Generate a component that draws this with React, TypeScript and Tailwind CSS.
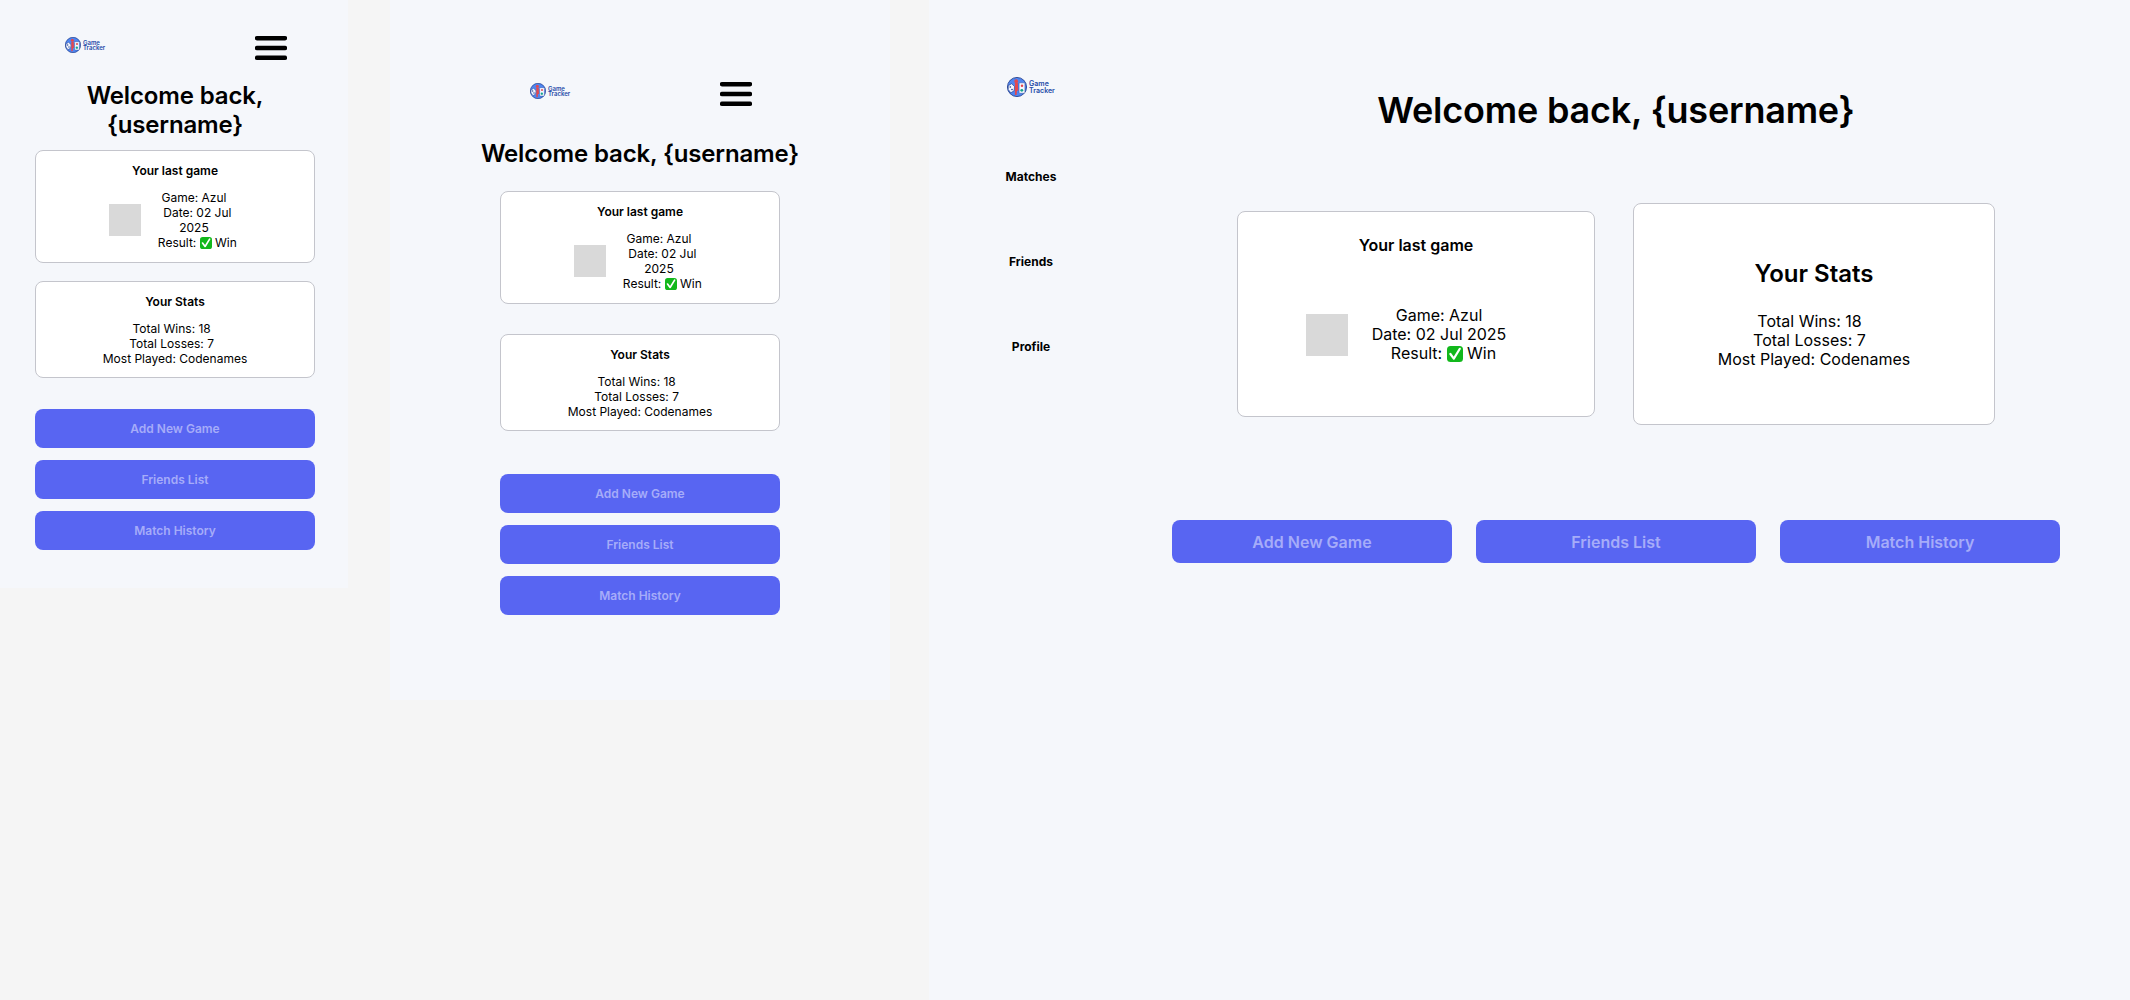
import { Fragment } from "react";

const Logo = ({ large = false }: { large?: boolean }) => (
  <div className="flex items-center gap-[2px]">
    <svg viewBox="0 0 48 48" className={large ? "w-[20px] h-[20px]" : "w-[16px] h-[16px]"}>
      <circle cx="24" cy="24" r="23" fill="#4F86F0" stroke="#1E3A8A" strokeWidth="2" />
      {/* dice */}
      <path d="M3 21 L11 16 L18 23 L17 33 L9 38 L3 30 Z" fill="#F4F7FF" stroke="#1E3A8A" strokeWidth="1.5" />
      <circle cx="8" cy="24" r="2" fill="#1E3A8A" />
      <circle cx="12" cy="30" r="2" fill="#1E3A8A" />
      {/* pawn */}
      <circle cx="22" cy="10" r="4.5" fill="#E5484D" />
      <path d="M19 14 H26 L27 33 H24 L23 43 H19 Z" fill="#E5484D" />
      {/* card */}
      <rect x="29" y="14" width="14" height="25" rx="2" fill="#F4F7FF" stroke="#1E3A8A" strokeWidth="1" />
      <circle cx="36" cy="21" r="3" fill="#E5484D" />
      <circle cx="35.5" cy="32" r="3.5" fill="#14A38B" />
    </svg>
    <div
      className={
        large
          ? "flex flex-col text-[7px] leading-[7px] font-semibold text-[#1E4AA8]"
          : "flex flex-col text-[6px] leading-[5px] font-semibold text-[#1E4AA8]"
      }
    >
      <span>Game</span>
      <span>Tracker</span>
    </div>
  </div>
);

const Hamburger = () => (
  <svg viewBox="0 0 32 24" className="w-[32px] h-[24px]">
    <line x1="2" y1="2.2" x2="30" y2="2.2" stroke="#000" strokeWidth="4.4" strokeLinecap="round" />
    <line x1="2" y1="12" x2="30" y2="12" stroke="#000" strokeWidth="4.4" strokeLinecap="round" />
    <line x1="2" y1="21.8" x2="30" y2="21.8" stroke="#000" strokeWidth="4.4" strokeLinecap="round" />
  </svg>
);

const CheckEmoji = ({ large = false }: { large?: boolean }) => (
  <svg
    viewBox="0 0 16 16"
    className={large ? "inline-block w-[16px] h-[16px] align-[-3px]" : "inline-block w-[12px] h-[12px] align-[-2px]"}
  >
    <rect width="16" height="16" rx="3.5" fill="#12B81C" />
    <path d="M3.4 8 L6.8 12.6 L12.8 2.8" fill="none" stroke="#fff" strokeWidth="2.2" strokeLinecap="round" strokeLinejoin="round" />
  </svg>
);

const buttons = ["Add New Game", "Friends List", "Match History"];

const MobileCards = ({ gap }: { gap: string }) => (
  <div className={`flex flex-col ${gap}`}>
    <div className="w-[280px] h-[113px] bg-white border border-[#C4C5CC] rounded-lg pt-[12px] flex flex-col items-center text-black">
      <h2 className="text-xs leading-[15px] font-semibold">Your last game</h2>
      <div className="self-start ml-[73px] mt-[12px] flex items-center gap-[8px]">
        <div className="w-[32px] h-[32px] bg-[#D9D9D9]" />
        <div className="w-[90px] text-xs leading-[15px] text-center whitespace-pre-wrap">
          <p>Game: Azul</p>
          <p>{"  Date: 02 Jul 2025"}</p>
          <p>
            {"  Result: "}
            <CheckEmoji /> Win
          </p>
        </div>
      </div>
    </div>
    <div className="w-[280px] h-[97px] bg-white border border-[#C4C5CC] rounded-lg pt-[12px] flex flex-col items-center text-black">
      <h2 className="text-xs leading-[15px] font-semibold">Your Stats</h2>
      <div className="mt-[12px] text-xs leading-[15px] text-center whitespace-pre">
        <p>{"Total Wins: 18  "}</p>
        <p>{"Total Losses: 7  "}</p>
        <p>Most Played: Codenames</p>
      </div>
    </div>
  </div>
);

const MobileButtons = () => (
  <div className="flex flex-col gap-[12px]">
    {buttons.map((label) => (
      <button
        key={label}
        className="w-[280px] h-[39px] bg-[#5865F2] rounded-lg text-xs font-semibold text-[#A6ACF9]"
      >
        {label}
      </button>
    ))}
  </div>
);

export default function App() {
  return (
    <div className="flex items-start w-full h-[1000px] bg-[#F5F5F5] font-[Inter,sans-serif]">
      {/* phone */}
      <section className="w-[348px] h-[588px] shrink-0 bg-[#F5F7FB] pl-[35px] flex flex-col">
        <div className="w-[252px] pt-[36px] pl-[30px] flex items-start justify-between">
          <div className="mt-[1px]">
            <Logo />
          </div>
          <Hamburger />
        </div>
        <h1 className="w-[280px] mt-[21px] text-2xl leading-[29px] font-semibold tracking-[-0.006em] text-center text-black">
          Welcome back, {"{username}"}
        </h1>
        <div className="mt-[11px]">
          <MobileCards gap="gap-[18px]" />
        </div>
        <div className="mt-[31px]">
          <MobileButtons />
        </div>
      </section>

      {/* tablet */}
      <section className="w-[500px] h-[700px] shrink-0 ml-[42px] bg-[#F5F7FB] flex flex-col items-center">
        <div className="w-[224px] pt-[82px] pl-[2px] flex items-start justify-between">
          <div className="mt-[1px]">
            <Logo />
          </div>
          <Hamburger />
        </div>
        <h1 className="mt-[33px] text-2xl leading-[29px] font-semibold tracking-[-0.006em] text-center text-black whitespace-nowrap">
          Welcome back, {"{username}"}
        </h1>
        <div className="mt-[23px]">
          <MobileCards gap="gap-[30px]" />
        </div>
        <div className="mt-[43px]">
          <MobileButtons />
        </div>
      </section>

      {/* desktop */}
      <section className="flex-1 h-[1000px] ml-[39px] bg-[#F5F7FB] flex text-black">
        <aside className="w-[173px] shrink-0 pl-[31px] pt-[77px] flex flex-col items-center">
          <Logo large />
          <nav className="mt-[72px] flex flex-col items-center gap-[70px] text-xs leading-[15px] font-bold">
            {["Matches", "Friends", "Profile"].map((item) => (
              <Fragment key={item}>
                <a>{item}</a>
              </Fragment>
            ))}
          </nav>
        </aside>
        <main className="flex-1 pt-[88px] flex flex-col items-center">
          <h1 className="text-4xl leading-[44px] font-semibold tracking-[-0.006em]">Welcome back, {"{username}"}</h1>
          <div className="mt-[71px] flex items-center gap-[38px]">
            <div className="w-[358px] h-[206px] bg-white border border-[#C4C5CC] rounded-lg pt-[24px] flex flex-col items-center">
              <h2 className="text-base leading-[19px] font-semibold">Your last game</h2>
              <div className="self-start ml-[68px] mt-[51px] flex items-center gap-[23px]">
                <div className="w-[42px] h-[42px] bg-[#D9D9D9]" />
                <div className="w-[136px] text-base leading-[19px] text-center whitespace-pre">
                  <p>Game: Azul</p>
                  <p>Date: 02 Jul 2025</p>
                  <p>
                    {"  Result: "}
                    <CheckEmoji large /> Win
                  </p>
                </div>
              </div>
            </div>
            <div className="w-[362px] h-[222px] bg-white border border-[#C4C5CC] rounded-lg pt-[55px] flex flex-col items-center">
              <h2 className="text-2xl leading-[29px] font-semibold">Your Stats</h2>
              <div className="mt-[24px] text-base leading-[19px] text-center whitespace-pre">
                <p>{"Total Wins: 18  "}</p>
                <p>{"Total Losses: 7  "}</p>
                <p>Most Played: Codenames</p>
              </div>
            </div>
          </div>
          <div className="mt-[95px] flex gap-[24px]">
            {buttons.map((label) => (
              <button
                key={label}
                className="w-[280px] h-[43px] bg-[#5865F2] rounded-lg text-base font-semibold text-[#A6ACF9]"
              >
                {label}
              </button>
            ))}
          </div>
        </main>
      </section>
    </div>
  );
}
